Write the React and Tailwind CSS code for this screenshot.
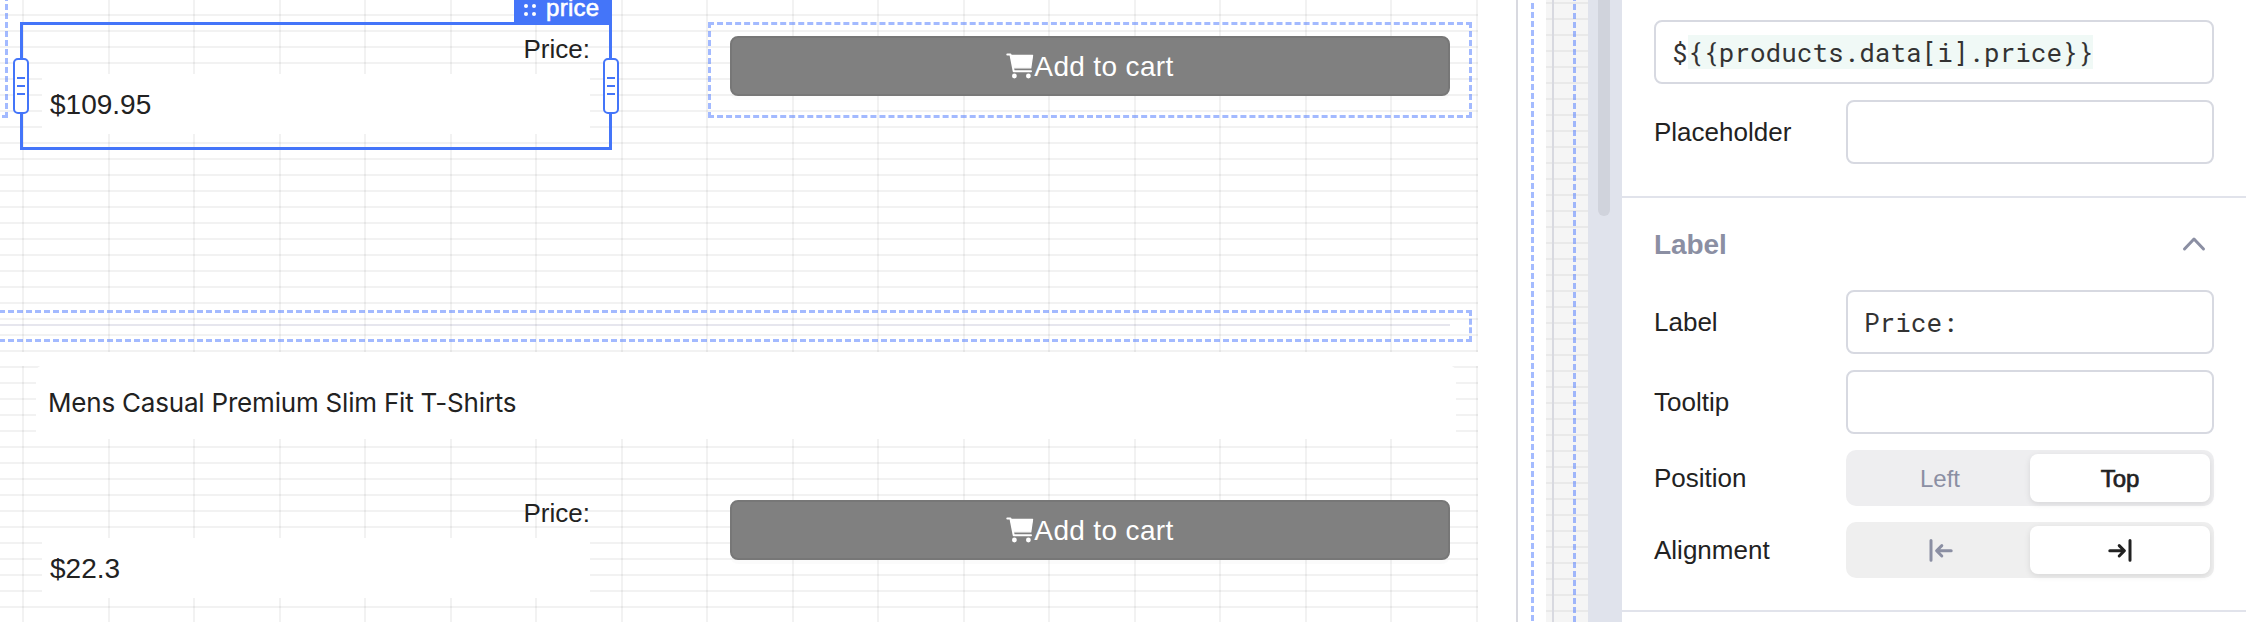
import React from "react";

const COLUMN_LINES = Array.from({ length: 18 }, (_, i) => i);

function ColumnLines() {
  return (
    <div className="pointer-events-none absolute inset-y-0 left-[22px] flex w-[1456px] justify-between">
      {COLUMN_LINES.map((i) => (
        <div key={i} className="h-full w-0.5 bg-black/5" />
      ))}
    </div>
  );
}

function PriceField({ value }) {
  return (
    <div className="relative flex w-[548px] flex-col">
      <div className="h-[38px] text-right text-[26px] leading-[26px]">Price:</div>
      <div className="flex h-[60px] items-center bg-white pl-2 text-[28px] leading-[28px]">
        <span className="relative top-px">{value}</span>
      </div>
    </div>
  );
}

function CartIcon() {
  return (
    <svg className="h-[26px] w-[28px]" viewBox="0 0 28 26" fill="none" stroke="currentColor" strokeLinecap="round" strokeLinejoin="round">
      <path d="M1.3 1.4H4.4L7.7 18.2H25" strokeWidth="2" />
      <path d="M4.8 2.4H26.6L24.8 14.8H7.4Z" fill="currentColor" strokeWidth="1.2" />
      <circle cx="8.4" cy="23" r="2.4" fill="currentColor" stroke="none" />
      <circle cx="22.4" cy="23" r="2.4" fill="currentColor" stroke="none" />
    </svg>
  );
}

function CartButton() {
  return (
    <button className="relative flex h-[60px] w-[720px] items-center justify-center rounded-lg border-2 border-[#777777] bg-[#808080] text-[28px] leading-[28px] tracking-[0.35px] text-white shadow-[0_4px_0_rgba(0,0,0,0.016)]">
      <CartIcon />
      <span className="relative top-px">Add to cart</span>
    </button>
  );
}

function ResizeHandle({ className }) {
  return (
    <div
      className={`absolute top-[33px] flex h-14 w-4 flex-col items-center justify-center gap-1.5 rounded-[5px] border-2 border-[#4475f9] bg-white ${className}`}
    >
      <div className="h-0.5 w-2 bg-[#4475f9]" />
      <div className="h-0.5 w-2 bg-[#4475f9]" />
      <div className="h-0.5 w-2 bg-[#4475f9]" />
    </div>
  );
}

function Selection() {
  return (
    <div className="absolute left-5 top-[22px] h-32 w-[592px] border-[3px] border-[#4475f9]">
      <div className="absolute -right-[3px] -top-[40px] flex h-10 w-[98px] items-center bg-[#4475f9] pl-2.5 text-white">
        <svg className="relative top-[5px] h-3 w-3" viewBox="0 0 12 12" fill="currentColor">
          <circle cx="2" cy="2" r="2" />
          <circle cx="10" cy="2" r="2" />
          <circle cx="2" cy="10" r="2" />
          <circle cx="10" cy="10" r="2" />
        </svg>
        <span className="relative top-[3px] ml-[10px] text-[24px] leading-[28px] tracking-[0.3px] [-webkit-text-stroke:0.6px_white]">
          price
        </span>
      </div>
      <ResizeHandle className="-left-[10px]" />
      <ResizeHandle className="-right-[10px]" />
    </div>
  );
}

function Canvas() {
  return (
    <div className="relative flex h-full w-[1588px] shrink-0 overflow-hidden bg-white">
      <div className="flex w-[1516px] shrink-0 flex-col gap-3.5">
        <div className="relative h-[352px] w-[1478px] shrink-0 bg-[repeating-linear-gradient(to_bottom,transparent_0_14px,rgba(0,0,0,0.05)_14px_16px)]">
          <ColumnLines />
          <div className="flex gap-[140px] pl-[42px] pt-9">
            <PriceField value="$109.95" />
            <CartButton />
          </div>
          <div className="mt-[190px] h-0.5 w-[1450px] bg-[#e6e6ee]" />
          <div className="absolute -left-[100px] -top-[95px] h-[213px] w-[108px] border-[3px] border-dashed border-[#4a77ff]/50" />
          <div className="absolute left-[708px] top-[22px] h-24 w-[764px] border-[3px] border-dashed border-[#4a77ff]/50" />
          <div className="absolute -left-[100px] top-[310px] h-8 w-[1572px] border-[3px] border-dashed border-[#4a77ff]/50" />
          <Selection />
        </div>
        <div className="relative h-[256px] w-[1478px] shrink-0 bg-[repeating-linear-gradient(to_bottom,rgba(0,0,0,0.05)_0_2px,transparent_2px_16px)]">
          <ColumnLines />
          <div className="relative -mt-px ml-9 flex h-[74px] w-[1420px] items-center rounded-t-lg bg-white pl-3 pt-0.5">
            <span className="font-['Inter'] text-[26px] leading-[32px] tracking-[-0.2px]">
              Mens Casual Premium Slim Fit T-Shirts
            </span>
          </div>
          <div className="flex gap-[140px] pl-[42px] pt-[61px]">
            <PriceField value="$22.3" />
            <CartButton />
          </div>
        </div>
      </div>
      <div className="flex w-[30px] shrink-0 border-l-2 border-[#d8d9e0]">
        <div className="-mt-1.5 ml-[13px] h-[650px] w-[3px] bg-[repeating-linear-gradient(to_bottom,#a4bbff_0_6px,transparent_6px_9px)]" />
      </div>
      <div className="flex w-[42px] shrink-0 bg-[#f5f5f5] bg-[repeating-linear-gradient(to_bottom,transparent_0_2px,rgba(0,0,0,0.05)_2px_4px,transparent_4px_16px)]">
        <div className="ml-1.5 w-0.5 bg-[#d8d9e0]" />
        <div className="-mt-[5px] ml-[19px] h-[650px] w-[3px] bg-[repeating-linear-gradient(to_bottom,rgba(74,119,255,0.5)_0_6px,transparent_6px_9px)]" />
      </div>
    </div>
  );
}

function Row({ label, children, className = "h-16" }) {
  return (
    <div className={`flex items-center ${className}`}>
      <div className="w-48 shrink-0 text-[26px] leading-[30px]">{label}</div>
      {children}
    </div>
  );
}

function Input({ children }) {
  return (
    <div className="flex h-16 flex-1 items-center rounded-lg border-2 border-[#d7d9e1] bg-white pl-4 font-['Roboto_Mono','Liberation_Mono',monospace] text-[26px] leading-[34px] text-[#333333]">
      {children}
    </div>
  );
}

function Segmented({ first, second, className }) {
  return (
    <div className={`flex h-14 flex-1 rounded-[10px] p-1 text-[24px] leading-[28px] ${className}`}>
      <div className="flex flex-1 items-center justify-center text-[#8b8fa3]">{first}</div>
      <div className="flex flex-1 items-center justify-center rounded-lg bg-white text-[#222222] shadow-[0_2px_6px_rgba(0,0,0,0.1)]">
        {second}
      </div>
    </div>
  );
}

function AlignIcon({ className = "" }) {
  return (
    <svg
      className={`h-6 w-[26px] ${className}`}
      viewBox="0 0 26 24"
      fill="none"
      stroke="currentColor"
      strokeWidth="3"
      strokeLinecap="round"
      strokeLinejoin="round"
    >
      <path d="M3 2.6V22.2M23.2 12.8H9M13.8 7.6L8.6 12.8L13.8 18" />
    </svg>
  );
}

function PropertyPanel() {
  return (
    <div className="flex w-[624px] shrink-0 flex-col bg-white">
      <div className="flex h-[198px] shrink-0 flex-col gap-4 border-b-2 border-[#e1e3eb] pl-8 pr-8">
        <div className="-mb-0.5 -mt-6 shrink-0 text-[26px] leading-[30px]">Default value</div>
        <div className="flex">
          <Input>
            <span>$</span>
            <span className="bg-[#f0f9f6]">{"{{products.data[i].price}}"}</span>
          </Input>
        </div>
        <Row label="Placeholder">
          <Input />
        </Row>
      </div>
      <div className="flex h-[414px] shrink-0 flex-col border-b-2 border-[#e1e3eb] pl-8 pr-8">
        <div className="flex h-[92px] items-center justify-between pr-[8px] text-[#8b8fa3]">
          <span className="pt-0.5 text-[28px] font-bold leading-[32px] tracking-[-0.1px]">Label</span>
          <svg className="h-4 w-6" viewBox="0 0 24 16" fill="none" stroke="currentColor" strokeWidth="3" strokeLinecap="round" strokeLinejoin="round">
            <path d="M2.5 13L12 3L21.5 13" />
          </svg>
        </div>
        <div className="flex flex-col gap-4">
          <Row label="Label">
            <Input>Price:</Input>
          </Row>
          <Row label="Tooltip">
            <Input />
          </Row>
          <Row label="Position" className="h-14">
            <Segmented
              className="bg-[#eeeef0]"
              first={<span className="pt-0.5">Left</span>}
              second={<span className="pt-0.5 [-webkit-text-stroke:0.7px_#222222]">Top</span>}
            />
          </Row>
          <Row label="Alignment" className="h-14">
            <Segmented
              className="bg-[#efefef]"
              first={<AlignIcon className="ml-[2px]" />}
              second={<AlignIcon className="-scale-x-100" />}
            />
          </Row>
        </div>
      </div>
    </div>
  );
}

export default function App() {
  return (
    <div className="flex h-[622px] w-[2246px] overflow-hidden bg-white font-['Liberation_Sans',Arial,sans-serif] text-[#222222]">
      <Canvas />
      <div className="flex w-[34px] shrink-0 justify-center bg-[#e0e3ec] pr-[2px]">
        <div className="h-[216px] w-3 rounded-b-full bg-[#d0d3dc]" />
      </div>
      <PropertyPanel />
    </div>
  );
}
